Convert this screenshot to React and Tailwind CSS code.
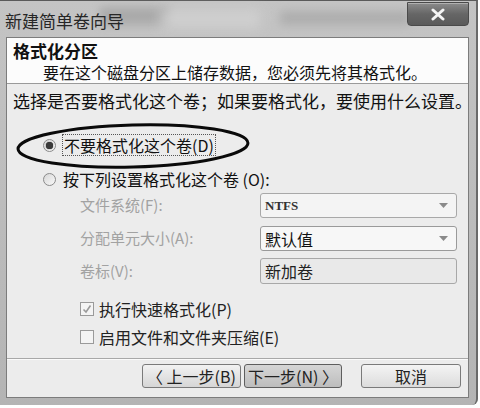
import React from "react";

const F = { fontFamily: '"Noto Sans CJK SC", "Noto Sans", sans-serif' };

function Radio({ checked }) {
  return (
    <span className="relative w-[13px] h-[13px] rounded-full border border-[#8a8a8a] bg-gradient-to-br from-[#d8d8d8] to-[#f8f8f8] flex items-center justify-center shrink-0">
      {checked && <span className="w-[7px] h-[7px] rounded-full bg-[#3a3a3a] shadow-[0_0_1px_#000]" />}
    </span>
  );
}

function Check({ checked }) {
  return (
    <span className="w-[14px] h-[14px] border border-[#9a9a9a] bg-[#f4f4f4] flex items-center justify-center shrink-0">
      {checked && (
        <svg width="10" height="10" viewBox="0 0 10 10">
          <path d="M1.5 5.5 L4 8 L8.5 1.5" stroke="#9a9a9a" strokeWidth="1.6" fill="none" />
        </svg>
      )}
    </span>
  );
}

function Arrow() {
  return (
    <svg width="9" height="6" viewBox="0 0 9 6" className="ml-auto mr-[8px]">
      <path d="M0 0 L9 0 L4.5 5 Z" fill="#8a8a8a" />
    </svg>
  );
}

export default function App() {
  return (
    <div style={F} className="w-[480px] h-[408px] bg-white overflow-hidden">
      <div className="w-[478px] h-[405px] bg-gradient-to-b from-[#c4c4c4] to-[#b4b4b4] border-t border-[#5a5a5a] border-r-2 border-r-[#6a6a6a] rounded-br-[6px] flex flex-col">
        {/* Title bar */}
        <div className="h-[36px] flex items-start relative">
          <div className="absolute left-[100px] top-[6px] w-[70px] h-[18px] bg-[#9a9a9a] blur-[4px] opacity-60" />
          <div className="absolute left-[280px] top-[10px] w-[130px] h-[14px] bg-[#a0a0a0] blur-[5px] opacity-60" />
          <div className="absolute left-[160px] top-[8px] w-[100px] h-[20px] bg-[#d4d4d4] blur-[6px] opacity-70" />
          <span className="relative text-[17px] leading-[20px] text-[#262626] ml-[5px] mt-[10px] tracking-[0px]">新建简单卷向导</span>
          <div className="relative ml-auto mr-[7px] mt-[1px] w-[62px] h-[24px] rounded-b-[4px] border border-[#4a4a4a] bg-gradient-to-b from-[#8c8c8c] via-[#666666] to-[#5a5a5a] flex items-center justify-center shadow-[inset_0_1px_0_#b0b0b0]">
            <svg width="16" height="13" viewBox="0 0 16 13">
              <path d="M3 2 L13 11 M13 2 L3 11" stroke="#f4f4f4" strokeWidth="3" strokeLinecap="round" />
            </svg>
          </div>
        </div>

        {/* Content */}
        <div className="ml-[6px] mr-[7px] h-[361px] border border-[#7c7c7c] bg-[#ececec] flex flex-col relative text-[#111]">
          {/* Header */}
          <div className="h-[46px] bg-[#fcfcfc] border-b border-[#9a9a9a] flex flex-col pl-[6px] pt-[3px]">
            <span className="text-[17px] leading-[20px] font-bold">格式化分区</span>
            <span className="text-[16px] leading-[20px] ml-[30px] mt-[1px]">要在这个磁盘分区上储存数据，您必须先将其格式化。</span>
          </div>

          <div className="mt-[7px] h-[20px] pl-[6px] text-[17px] leading-[20px] whitespace-nowrap">选择是否要格式化这个卷；如果要格式化，要使用什么设置。</div>

          <div className="mt-[24px] h-[20px] pl-[36px] flex items-center gap-[7px] text-[16px] leading-[20px]">
            <Radio checked />
            <span className="outline-1 outline-dotted outline-[#555] px-[1px]">不要格式化这个卷(D)</span>
          </div>

          <div className="mt-[14px] h-[20px] pl-[36px] flex items-center gap-[7px] text-[16px] leading-[20px]">
            <Radio />
            <span>按下列设置格式化这个卷 (O):</span>
          </div>

          <div className="mt-[4px] h-[25px] pl-[73px] flex items-center">
            <span className="w-[180px] text-[15px] text-[#a2a2a2]">文件系统(F):</span>
            <div className="w-[197px] h-[25px] border border-[#a8a8a8] rounded-[3px] bg-[#f4f4f4] flex items-center pl-[4px]">
              <span className="text-[13px] font-bold text-[#333]" style={{ fontFamily: '"Liberation Serif", serif' }}>NTFS</span>
              <Arrow />
            </div>
          </div>

          <div className="mt-[8px] h-[25px] pl-[73px] flex items-center">
            <span className="w-[180px] text-[15px] text-[#a2a2a2]">分配单元大小(A):</span>
            <div className="w-[197px] h-[25px] border border-[#9a9a9a] rounded-[3px] bg-[#f7f7f7] flex items-center pl-[4px]">
              <span className="text-[16px] text-[#111]">默认值</span>
              <Arrow />
            </div>
          </div>

          <div className="mt-[7px] h-[26px] pl-[73px] flex items-center">
            <span className="w-[180px] text-[15px] text-[#a2a2a2]">卷标(V):</span>
            <div className="w-[197px] h-[26px] border border-[#a8a8a8] rounded-[3px] bg-[#e9e9e9] flex items-center pl-[4px]">
              <span className="text-[16px] text-[#222]">新加卷</span>
            </div>
          </div>

          <div className="mt-[15px] h-[20px] pl-[73px] flex items-center gap-[5px] text-[16px]">
            <Check checked />
            <span className="text-[#222]">执行快速格式化(P)</span>
          </div>

          <div className="mt-[8px] h-[20px] pl-[73px] flex items-center gap-[5px] text-[16px]">
            <Check />
            <span className="text-[#222]">启用文件和文件夹压缩(E)</span>
          </div>

          <div className="mt-[11px] border-t border-[#a8a8a8] shadow-[0_1px_0_#fafafa]" />

          <div className="mt-[5px] flex items-center pr-[7px] justify-end text-[16px]">
            <button className="w-[99px] h-[24px] rounded-[3px] border border-[#7a7a7a] bg-gradient-to-b from-[#f2f2f2] to-[#d6d6d6] flex items-center justify-center leading-none text-[#222]">〈 上一步(B)</button>
            <button className="ml-[3px] w-[98px] h-[24px] rounded-[3px] border border-[#5e5e5e] bg-gradient-to-b from-[#d6d6d6] to-[#bdbdbd] flex items-center justify-center leading-none text-[#222]">下一步(N) 〉</button>
            <button className="ml-[19px] w-[100px] h-[24px] rounded-[3px] border border-[#7a7a7a] bg-gradient-to-b from-[#f4f4f4] to-[#dcdcdc] flex items-center justify-center leading-none text-[#222]">取消</button>
          </div>

          {/* Annotation ellipse */}
          <svg className="absolute left-[8px] top-[84px]" width="240" height="50" viewBox="0 0 240 50">
            <ellipse cx="118" cy="24" rx="115" ry="21" fill="none" stroke="#0a0a0a" strokeWidth="3" transform="rotate(-1.5 118 24)" />
          </svg>
        </div>
      </div>
    </div>
  );
}
